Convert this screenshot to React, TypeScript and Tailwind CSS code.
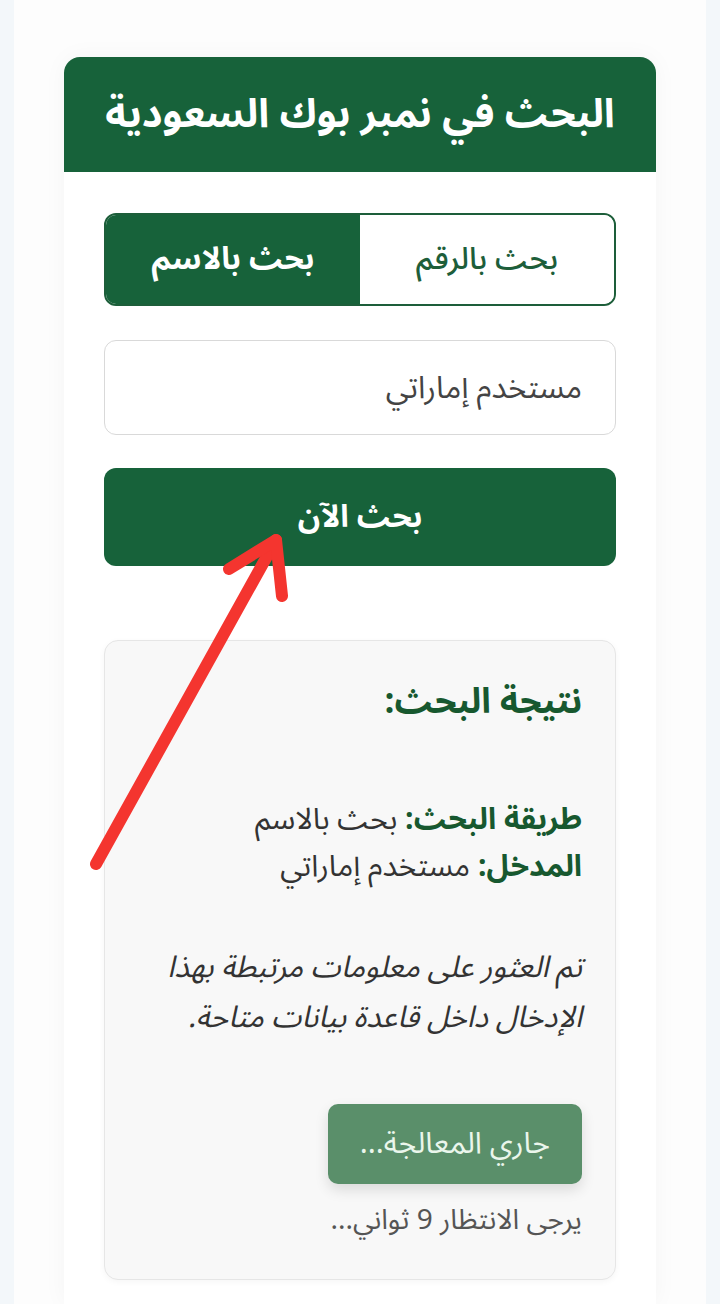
import React, { useState } from 'react';

const App = () => {
  const [mode, setMode] = useState<'name' | 'number'>('name');

  return (
    <div
      dir="rtl"
      className="min-h-[1304px] bg-[#f3f7fa] px-[14px] overflow-hidden"
      style={{ fontFamily: '"Noto Sans Arabic", "Noto Sans", "DejaVu Sans", sans-serif' }}
    >
      <div className="relative min-h-[1304px] bg-[#fdfdfd] px-[50px] pt-[57px]">
        {/* Card */}
        <div className="bg-white rounded-t-[16px] shadow-[0_0_24px_rgba(0,0,0,0.04)] min-h-[1247px]">
          <div className="bg-[#17623a] rounded-t-[16px] h-[115px] flex items-center justify-center">
            <h1 className="text-white text-[40px] font-bold leading-none">البحث في نمبر بوك السعودية</h1>
          </div>

          <div className="px-[40px] pt-[41px]">
            {/* Toggle */}
            <div className="flex h-[93px] border-2 border-[#1d5e3a] rounded-[12px] overflow-hidden">
              <button
                onClick={() => setMode('number')}
                className={`flex-1 text-[31px] leading-none ${mode === 'number' ? 'bg-[#17623a] text-white font-bold' : 'bg-white text-[#1d5e3a] font-medium'}`}
              >
                بحث بالرقم
              </button>
              <button
                onClick={() => setMode('name')}
                className={`flex-1 text-[31px] leading-none ${mode === 'name' ? 'bg-[#17623a] text-white font-bold' : 'bg-white text-[#1d5e3a] font-medium'}`}
              >
                بحث بالاسم
              </button>
            </div>

            {/* Input */}
            <input
              type="text"
              defaultValue="مستخدم إماراتي"
              className="mt-[34px] w-full h-[95px] border border-[#d9d9d9] rounded-[12px] px-[33px] text-[31px] text-[#444] bg-white outline-none"
            />

            {/* Search button */}
            <button className="mt-[33px] w-full h-[98px] bg-[#17623a] rounded-[12px] text-white text-[31px] font-bold leading-none">
              بحث الآن
            </button>

            {/* Result */}
            <div className="mt-[74px] bg-[#f8f8f8] border border-[#e6e6e6] rounded-[14px] px-[33px] pt-[38px] pb-[43px] shadow-[0_2px_6px_rgba(0,0,0,0.04)]">
              <h2 className="text-[#17582f] text-[35px] font-bold leading-[46px]">نتيجة البحث:</h2>

              <div className="mt-[71px] text-[30px] leading-[47px] text-[#333]">
                <p>
                  <span className="font-bold text-[#17582f]">طريقة البحث:</span> بحث بالاسم
                </p>
                <p>
                  <span className="font-bold text-[#17582f]">المدخل:</span> مستخدم إماراتي
                </p>
              </div>

              <p className="mt-[53px] text-[30px] leading-[50px] italic text-[#333]">
                تم العثور على معلومات مرتبطة بهذا الإدخال داخل قاعدة بيانات متاحة.
              </p>

              <div className="mt-[61px]">
                <button className="h-[80px] px-[32px] bg-[#5a8f6a] rounded-[10px] text-[#eaf6ec] text-[30px] leading-none shadow-[0_6px_14px_rgba(0,0,0,0.12)]">
                  جاري المعالجة...
                </button>
                <p className="mt-[22px] text-[28px] leading-[30px] text-[#555]">يرجى الانتظار 9 ثواني...</p>
              </div>
            </div>
          </div>
        </div>

        {/* Red annotation arrow */}
        <svg
          className="absolute left-[0px] top-0 pointer-events-none"
          width="706"
          height="900"
          viewBox="0 0 706 900"
        >
          <g stroke="#f4352f" strokeWidth="12" strokeLinecap="round" strokeLinejoin="round" fill="none">
            <line x1="82" y1="864" x2="262" y2="540" />
            <polyline points="215,569 262,540 268,596" />
          </g>
        </svg>
      </div>
    </div>
  );
};

export default App;
